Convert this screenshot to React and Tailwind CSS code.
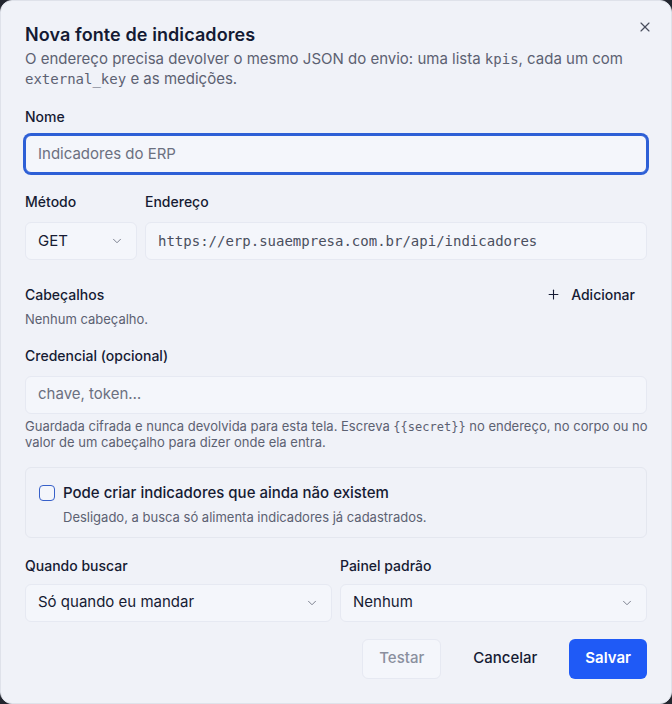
import { ChevronDown, Plus, X } from "lucide-react";

const sans = { fontFamily: "Inter, 'Noto Sans', sans-serif" };

function Label({ children, className = "" }) {
  return (
    <div className={"text-[14px] font-medium text-[#161b33] " + className}>
      {children}
    </div>
  );
}

function Select({ value, className = "" }) {
  return (
    <div
      className={
        "flex h-[38px] items-center justify-between rounded-md border border-[#e6e9f2] bg-[#f4f6fb] pl-3 pr-3 text-[15px] text-[#161b33] " +
        className
      }
    >
      <span>{value}</span>
      <ChevronDown size={14} strokeWidth={1.5} className="text-[#6b7080]" />
    </div>
  );
}

export default function App() {
  return (
    <div className="h-[704px] w-[672px] bg-[#23262f]" style={sans}>
      <div className="relative flex h-full flex-col rounded-xl border border-[#dfe2ea] bg-[#f0f2f8] px-6 pt-[22px]">
        <button className="absolute right-[18px] top-[18px] text-[#4a4f5e]">
          <X size={16} strokeWidth={1.75} />
        </button>

        <h2 className="text-[18px] font-semibold leading-6 tracking-[0.005em] text-[#141a33]">
          Nova fonte de indicadores
        </h2>
        <p className="mt-[2px] text-[15px] leading-[20px] text-[#5c6172]">
          O endereço precisa devolver o mesmo JSON do envio: uma lista{" "}
          <code className="font-['DejaVu_Sans_Mono'] text-[14px] leading-[20px]">kpis</code>,
          cada um com{" "}
          <code className="font-['DejaVu_Sans_Mono'] text-[14px] leading-[20px]">
            external_key
          </code>{" "}
          e as medições.
        </p>

        <Label className="mt-[17px]">Nome</Label>
        <div className="mt-[8px] flex h-[38px] items-center rounded-md border border-[#2d5fd6] bg-[#f4f6fb] px-3 text-[15px] text-[#6b7080] ring-2 ring-[#2d5fd6]">
          Indicadores do ERP
        </div>

        <div className="mt-[18px] flex gap-2">
          <div className="w-[112px]">
            <Label>Método</Label>
            <Select value="GET" className="mt-[10px]" />
          </div>
          <div className="flex-1">
            <Label>Endereço</Label>
            <div className="mt-[10px] flex h-[38px] items-center rounded-md border border-[#e6e9f2] bg-[#f4f6fb] px-3 font-['DejaVu_Sans_Mono'] text-[14px] text-[#4a4f5e]">
              https://erp.suaempresa.com.br/api/indicadores
            </div>
          </div>
        </div>

        <div className="mt-[24px] flex items-center justify-between">
          <Label>Cabeçalhos</Label>
          <button className="flex items-center gap-[10px] pr-3 text-[14px] font-medium text-[#161b33]">
            <Plus size={15} strokeWidth={1.75} />
            Adicionar
          </button>
        </div>
        <div className="mt-[5px] text-[13px] text-[#5c6172]">Nenhum cabeçalho.</div>

        <Label className="mt-[15px]">Credencial (opcional)</Label>
        <div className="mt-[10px] flex h-[38px] items-center rounded-md border border-[#e6e9f2] bg-[#f4f6fb] px-3 text-[15px] text-[#6b7080]">
          chave, token…
        </div>
        <p className="-mr-3 mt-[5px] text-[13px] leading-[15px] text-[#5c6172]">
          Guardada cifrada e nunca devolvida para esta tela. Escreva{" "}
          <code className="font-['DejaVu_Sans_Mono'] text-[12px] leading-[15px]">
            {"{{secret}}"}
          </code>{" "}
          no endereço, no corpo ou no valor de um cabeçalho para dizer onde ela
          entra.
        </p>

        <div className="mt-[17px] rounded-md border border-[#e4e7ef] bg-[#f0f2f8] px-[13px] pb-[9px] pt-[14px]">
          <label className="flex items-center gap-2">
            <span className="h-4 w-4 rounded-[4px] border-[1.5px] border-[#3760c9] bg-[#f4f6fb]" />
            <span className="text-[15px] font-medium text-[#161b33]">
              Pode criar indicadores que ainda não existem
            </span>
          </label>
          <div className="mt-[4px] pl-6 text-[13px] text-[#5c6172]">
            Desligado, a busca só alimenta indicadores já cadastrados.
          </div>
        </div>

        <div className="mt-[17px] flex gap-2">
          <div className="flex-1">
            <Label>Quando buscar</Label>
            <Select value="Só quando eu mandar" className="mt-[8px]" />
          </div>
          <div className="flex-1">
            <Label>Painel padrão</Label>
            <Select value="Nenhum" className="mt-[8px]" />
          </div>
        </div>

        <div className="mt-[17px] flex items-center justify-end gap-2">
          <button className="h-[40px] rounded-md border border-[#e6e9f2] bg-[#f4f6fb] px-4 text-[15px] font-medium text-[#8a8f9e]">
            Testar
          </button>
          <button className="h-[40px] px-[24px] text-[15px] font-medium text-[#161b33]">
            Cancelar
          </button>
          <button className="h-[40px] rounded-md bg-[#1f5af6] px-4 text-[15px] font-semibold text-white">
            Salvar
          </button>
        </div>
      </div>
    </div>
  );
}
